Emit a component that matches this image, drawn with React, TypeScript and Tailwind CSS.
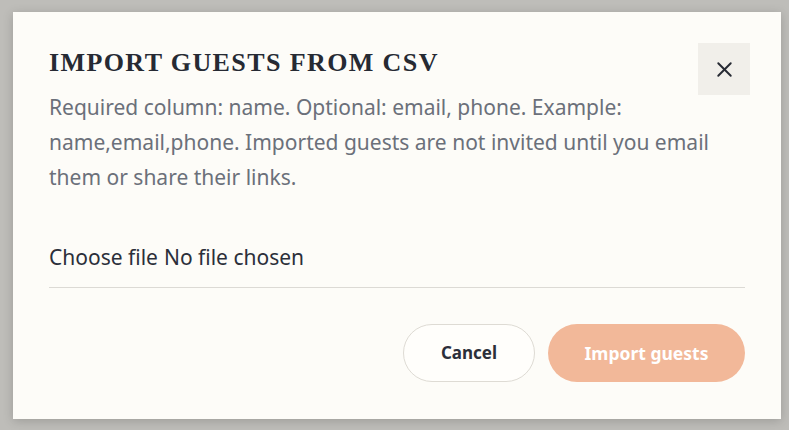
import { X } from 'lucide-react';

export default function App() {
   return (
      <div className="w-[789px] h-[430px] bg-[#bebdb9] pt-[12px] pl-[13px] overflow-hidden font-['Noto_Sans',sans-serif]">
         <div className="relative w-[768px] h-[407px] bg-[#fdfcf8] shadow-[0_2px_10px_rgba(0,0,0,0.18)] p-[36px] flex flex-col">
            <button
               type="button"
               aria-label="Close"
               className="absolute top-[31px] right-[31px] w-[52px] h-[52px] bg-[#f1efea] flex items-center justify-center text-[#262a33]"
            >
               <X size={25} strokeWidth={1.8} />
            </button>

            <h2 className="font-['Liberation_Serif',serif] font-bold text-[26px] leading-[30px] tracking-[1.4px] text-[#262a33] uppercase">
               Import guests from CSV
            </h2>
            <p className="mt-[12px] text-[21px] leading-[35px] text-[#6b707a] pr-[4px]">
               Required column: name. Optional: email, phone. Example: name,email,phone. Imported guests are not invited until you email them or share their links.
            </p>

            <label className="mt-[45px] flex items-center gap-[6px] text-[21px] leading-[35px] text-[#2b2f3a] pb-[12px] border-b border-[#dcdad5] cursor-pointer">
               <input type="file" accept=".csv" className="hidden" />
               <span>Choose file</span>
               <span>No file chosen</span>
            </label>

            <div className="mt-[36px] flex justify-end gap-[13px]">
               <button
                  type="button"
                  className="w-[132px] h-[58px] rounded-full border border-[#dedbd4] bg-[#fffefb] text-[17px] font-bold text-[#2b2f3a]"
               >
                  Cancel
               </button>
               <button
                  type="button"
                  className="w-[197px] h-[58px] rounded-full bg-[#f2b899] text-[17.5px] font-bold text-white"
               >
                  Import guests
               </button>
            </div>
         </div>
      </div>
   );
}
